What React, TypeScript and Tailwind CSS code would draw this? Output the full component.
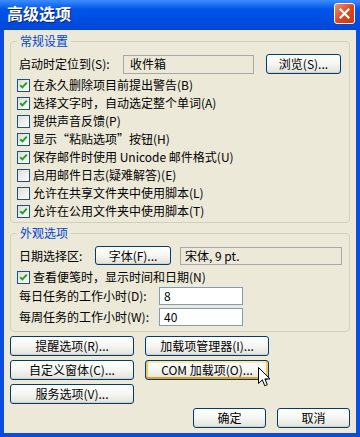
import React from "react";

const font = "[font-family:'Noto_Sans_CJK_SC',sans-serif]";

function Check({ checked }: { checked?: boolean }) {
  return (
    <span className="w-[13px] h-[13px] shrink-0 border border-[#1C5180] bg-gradient-to-br from-[#DCDCD7] to-white flex items-center justify-center">
      {checked && (
        <svg width="9" height="9" viewBox="0 0 9 9">
          <path d="M1.2 4.2 L3.4 6.4 L7.8 1.6" stroke="#21A121" strokeWidth="2" fill="none" />
        </svg>
      )}
    </span>
  );
}

function CheckRow({ label, checked }: { label: string; checked?: boolean }) {
  return (
    <div className="h-[18px] flex items-center gap-[3px]">
      <Check checked={checked} />
      <span className="leading-[18px]">{label}</span>
    </div>
  );
}

function Btn({ children, className = "", hot }: { children: React.ReactNode; className?: string; hot?: boolean }) {
  return (
    <div
      className={
        "border border-[#003C74] rounded-[3px] bg-gradient-to-b from-white via-[#F6F6F2] to-[#E2E1D9] flex items-center justify-center leading-none " +
        (hot
          ? "shadow-[inset_0_-2px_0_#E5A01A,inset_2px_0_0_#F9C659,inset_-2px_0_0_#F9C659,inset_0_2px_0_#FFE7A8] "
          : "shadow-[inset_0_-1px_0_#D6D0C5] ") +
        className
      }
    >
      {children}
    </div>
  );
}

function Group({ title, className, children }: { title: string; className: string; children: React.ReactNode }) {
  return (
    <div className={"relative mx-[6px] border border-[#D0D0BF] rounded-[4px] " + className}>
      <span className="absolute top-[-8px] left-[6px] px-[3px] bg-[#ECE9D8] text-[#0046D5] leading-[14px]">
        {title}
      </span>
      {children}
    </div>
  );
}

export default function App() {
  return (
    <div className={"relative w-[360px] h-[437px] bg-[#0A4DE0] flex flex-col text-[12px] text-black " + font}>
      {/* title bar */}
      <div className="h-[30px] shrink-0 flex items-center justify-between pl-[7px] pr-[5px] bg-gradient-to-b from-[#3B8CFF] via-[#0055EA] via-30% to-[#0047D8]">
        <span className="text-white font-bold text-[16px] leading-none pb-[4px] [text-shadow:1px_1px_0_#0A1E6E]">
          高级选项
        </span>
        <div className="w-[21px] h-[21px] mb-[3px] rounded-[3px] border border-white bg-gradient-to-br from-[#F0906C] via-[#E1461E] to-[#C8380F] flex items-center justify-center">
          <svg width="11" height="11" viewBox="0 0 11 11">
            <path d="M1.5 1.5 L9.5 9.5 M9.5 1.5 L1.5 9.5" stroke="white" strokeWidth="2.2" strokeLinecap="square" />
          </svg>
        </div>
      </div>

      {/* client */}
      <div className="flex-1 mx-[4px] mb-[4px] bg-[#ECE9D8] flex flex-col">
        <Group title="常规设置" className="mt-[11px] h-[182px] pt-[12px]">
          <div className="flex items-center h-[20px] pl-[8px]">
            <span className="w-[104px]">启动时定位到(S):</span>
            <div className="w-[131px] h-[19px] border border-[#A7A6AA] bg-[#ECE9D8] flex items-center pl-[6px]">
              收件箱
            </div>
            <Btn className="ml-[12px] w-[75px] h-[20px]">浏览(S)...</Btn>
          </div>
          <div className="mt-[2px] pl-[6px] flex flex-col">
            <CheckRow checked label="在永久删除项目前提出警告(B)" />
            <CheckRow checked label="选择文字时，自动选定整个单词(A)" />
            <CheckRow label="提供声音反馈(P)" />
            <CheckRow checked label="显示“粘贴选项”按钮(H)" />
            <CheckRow checked label="保存邮件时使用 Unicode 邮件格式(U)" />
            <CheckRow label="启用邮件日志(疑难解答)(E)" />
            <CheckRow label="允许在共享文件夹中使用脚本(L)" />
            <CheckRow checked label="允许在公用文件夹中使用脚本(T)" />
          </div>
        </Group>

        <Group title="外观选项" className="mt-[10px] h-[99px] pt-[12px]">
          <div className="flex items-center h-[19px] pl-[8px]">
            <span className="w-[76px]">日期选择区:</span>
            <Btn className="w-[76px] h-[19px]">字体(F)...</Btn>
            <div className="ml-[9px] w-[162px] h-[18px] border border-[#A7A6AA] bg-[#ECE9D8] flex items-center pl-[4px]">
              宋体, 9 pt.
            </div>
          </div>
          <div className="mt-[3px] pl-[6px]">
            <CheckRow checked label="查看便笺时，显示时间和日期(N)" />
          </div>
          <div className="mt-[1px] flex items-center h-[18px] pl-[8px]">
            <span className="w-[140px]">每日任务的工作小时(D):</span>
            <div className="w-[84px] h-[18px] border border-[#7F9DB9] bg-white flex items-center pl-[4px]">8</div>
          </div>
          <div className="mt-[3px] flex items-center h-[18px] pl-[8px]">
            <span className="w-[140px]">每周任务的工作小时(W):</span>
            <div className="w-[84px] h-[18px] border border-[#7F9DB9] bg-white flex items-center pl-[4px]">40</div>
          </div>
        </Group>

        <div className="flex mt-[4px] pl-[6px] gap-[11px]">
          <div className="flex flex-col gap-[4px] w-[124px]">
            <Btn className="h-[20px]">提醒选项(R)...</Btn>
            <Btn className="h-[20px]">自定义窗体(C)...</Btn>
            <Btn className="h-[20px]">服务选项(V)...</Btn>
          </div>
          <div className="flex flex-col gap-[4px] w-[124px]">
            <Btn className="h-[20px]">加载项管理器(I)...</Btn>
            <Btn className="h-[20px]" hot>COM 加载项(O)...</Btn>
          </div>
        </div>

        <div className="flex justify-end gap-[11px] pr-[6px] mt-[4px]">
          <Btn className="w-[73px] h-[20px]">确定</Btn>
          <Btn className="w-[73px] h-[20px]">取消</Btn>
        </div>
      </div>

      {/* mouse pointer */}
      <svg className="absolute left-[258px] top-[367px]" width="13" height="21" viewBox="0 0 13 21">
        <path d="M0.5 0.5 L0.5 16.5 L4.3 12.8 L6.8 18.8 L9.3 17.7 L6.9 11.9 L12 11.9 Z" fill="white" stroke="black" strokeWidth="1" strokeLinejoin="miter" />
      </svg>
    </div>
  );
}
